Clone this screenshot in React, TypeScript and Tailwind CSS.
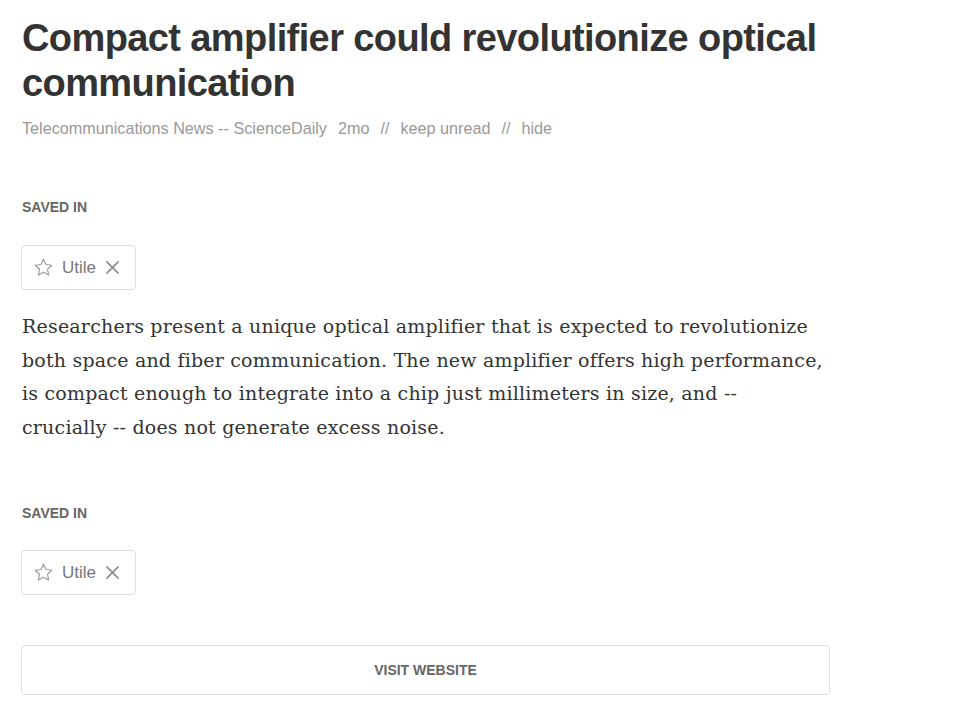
const StarIcon = () => (
  <svg className="w-[21px] h-[21px]" viewBox="0 0 24 24" fill="none" stroke="currentColor" strokeWidth="1.3" strokeLinejoin="round">
    <path d="M12 2.5l2.9 6.1 6.6.8-4.9 4.6 1.3 6.6L12 17.3l-5.9 3.3 1.3-6.6-4.9-4.6 6.6-.8z" />
  </svg>
);

const CloseIcon = () => (
  <svg className="w-[15px] h-[15px]" viewBox="0 0 16 16" fill="none" stroke="currentColor" strokeWidth="1.6" strokeLinecap="round">
    <path d="M2 2l12 12M14 2L2 14" />
  </svg>
);

const SavedIn = ({ gap }: { gap: string }) => (
  <div>
    <div className="ml-px text-[14px] font-bold uppercase text-[#666] leading-none">Saved in</div>
    <div className={`${gap} inline-flex items-center h-[45px] pl-[11px] pr-[15px] border border-[#ddd] rounded-[4px] bg-white`}>
      <span className="text-[#999]"><StarIcon /></span>
      <span className="ml-[8px] text-[17px] text-[#777]">Utile</span>
      <span className="ml-[9px] text-[#888]"><CloseIcon /></span>
    </div>
  </div>
);

export default function App() {
  return (
    <div className="min-h-screen bg-white font-['Liberation_Sans',Arial,sans-serif]">
      <div className="w-[830px] pl-[21px] pt-[16px]">
        <h1 className="ml-px text-[38px] font-bold leading-[45px] text-[#333] tracking-[-0.6px]">
          Compact amplifier could revolutionize optical communication
        </h1>
        <div className="ml-px mt-[14px] flex gap-[11px] text-[16.2px] text-[#999] leading-none">
          <span>Telecommunications News -- ScienceDaily</span>
          <span>2mo</span>
          <span>//</span>
          <span>keep unread</span>
          <span>//</span>
          <span>hide</span>
        </div>

        <div className="mt-[64px]">
          <SavedIn gap="mt-[31px]" />
        </div>

        <p className="ml-px mt-[20px] font-['DejaVu_Serif',serif] text-[19px] tracking-[0.2px] leading-[33.5px] text-[#333] pr-[5px]">
          Researchers present a unique optical amplifier that is expected to revolutionize both space and fiber
          communication. The new amplifier offers high performance, is compact enough to integrate into a chip just
          millimeters in size, and -- crucially -- does not generate excess noise.
        </p>

        <div className="mt-[62px]">
          <SavedIn gap="mt-[30px]" />
        </div>

        <button className="mt-[50px] w-full h-[50px] border border-[#ddd] rounded-[4px] bg-white text-[14px] font-bold uppercase text-[#666]">
          Visit website
        </button>
      </div>
    </div>
  );
}
